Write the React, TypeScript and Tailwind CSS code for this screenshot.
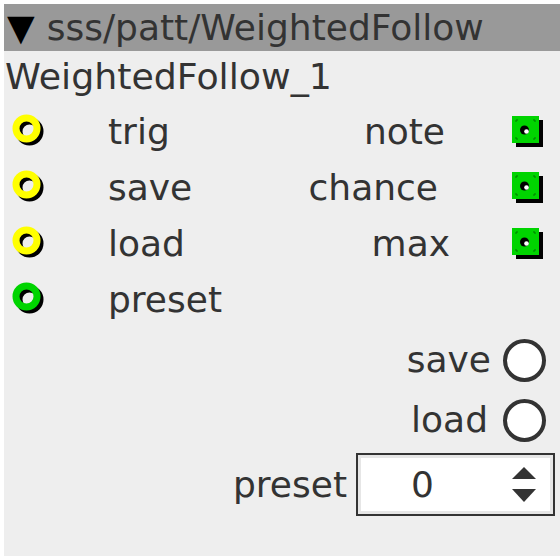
import React from "react";

type Port = { left: string; leftColor: string; right?: string; rightPad?: number };

const ports: Port[] = [
  { left: "trig", leftColor: "#ffff00", right: "note", rightPad: 67 },
  { left: "save", leftColor: "#ffff00", right: "chance", rightPad: 74 },
  { left: "load", leftColor: "#ffff00", right: "max", rightPad: 62 },
  { left: "preset", leftColor: "#00d400" },
];

function Inlet({ color }: { color: string }) {
  return (
    <svg width="36" height="36" viewBox="0 0 36 36" className="shrink-0">
      <circle cx="17.5" cy="17.5" r="10.5" fill="none" stroke="#000" strokeWidth="7" />
      <circle cx="14.5" cy="14.5" r="10.5" fill="none" stroke={color} strokeWidth="7" />
    </svg>
  );
}

function Outlet() {
  return (
    <svg width="32" height="32" viewBox="0 0 32 32" className="shrink-0">
      <rect x="4" y="4" width="27" height="27" fill="#000" />
      <rect x="0" y="0" width="27" height="27" fill="#00d400" />
      <path
        d="M4 6V4H6 M21 4H23V6 M4 21V23H6 M21 23H23V21"
        fill="none"
        stroke="#007a00"
        strokeWidth="1"
      />
      <circle cx="12.5" cy="14" r="4.5" fill="#000" />
      <circle cx="14.5" cy="15.5" r="2.3" fill="#fff" />
    </svg>
  );
}

function Spinner() {
  return (
    <svg width="24" height="35" viewBox="0 0 24 35" className="shrink-0">
      <polygon points="12,0 24,12 0,12" fill="#333" />
      <polygon points="0,22 24,22 12,35" fill="#333" />
    </svg>
  );
}

export default function App() {
  return (
    <div className="min-h-[560px] bg-white pt-1 pl-1 overflow-hidden">
      <div className="w-[556px] h-[552px] bg-[#eeeeee] flex flex-col font-['DejaVu_Sans',sans-serif] text-[36px] leading-none text-[#333]">
        <div className="h-[47px] shrink-0 bg-[#999999] flex items-center pl-[3px] whitespace-nowrap">
          <span className="text-black">▼</span>
          <span className="ml-[12px]">sss/patt/WeightedFollow</span>
        </div>
        <div className="h-[53px] shrink-0 flex items-center pl-[1px] text-[36.3px]">WeightedFollow_1</div>

        {ports.map((p) => (
          <div key={p.left} className="h-[56px] shrink-0 flex items-center pl-[8px] pr-[16px]">
            <Inlet color={p.leftColor} />
            <span className="ml-[60px]">{p.left}</span>
            {p.right && (
              <>
                <span className="ml-auto" style={{ paddingRight: p.rightPad }}>
                  {p.right}
                </span>
                <Outlet />
              </>
            )}
          </div>
        ))}

        <div className="h-[60px] mt-[2px] shrink-0 flex items-center justify-end pr-[14px]">
          <span>save</span>
          <div className="ml-[12px] w-[43px] h-[43px] rounded-full border-4 border-[#333] bg-white" />
        </div>
        <div className="h-[60px] shrink-0 flex items-center justify-end pr-[14px]">
          <span>load</span>
          <div className="ml-[15px] w-[43px] h-[43px] rounded-full border-4 border-[#333] bg-white" />
        </div>
        <div className="h-[63px] mt-[3px] shrink-0 flex items-center justify-end pr-[5px]">
          <span>preset</span>
          <div className="ml-[9px] w-[199px] h-[63px] border-2 border-[#333] bg-[#e6e6e6] p-[3px] flex">
            <div className="flex-1 bg-white flex items-center">
              <span className="ml-[50px]">0</span>
              <span className="ml-auto mr-[14px] flex">
                <Spinner />
              </span>
            </div>
          </div>
        </div>
      </div>
    </div>
  );
}
